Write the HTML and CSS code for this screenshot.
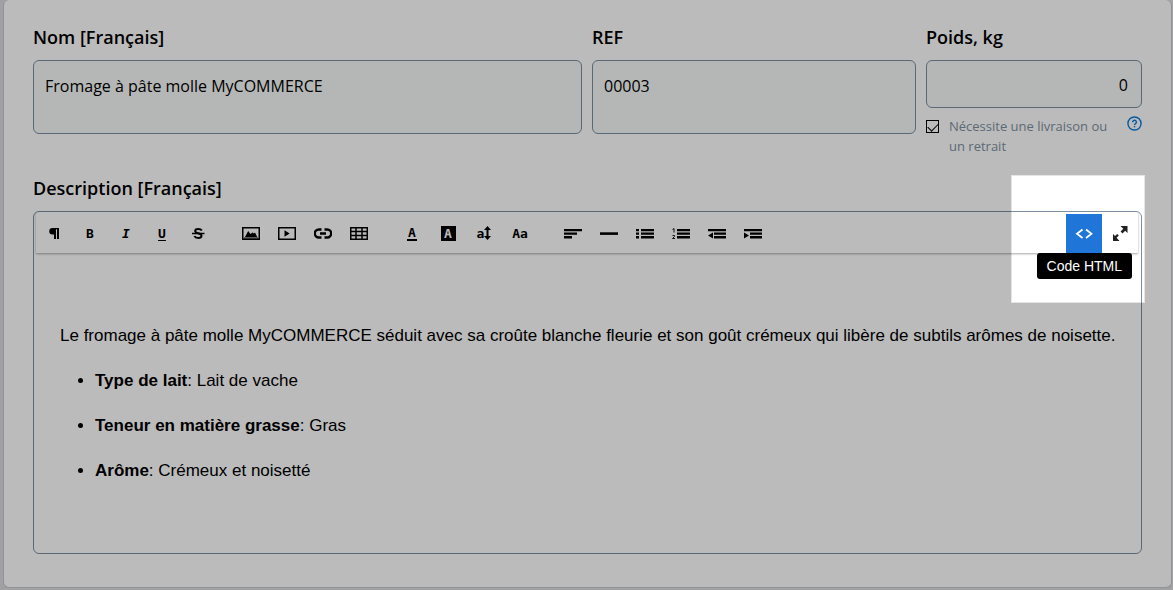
FILE: index.html
```html
<!DOCTYPE html>
<html lang="fr">
<head>
<meta charset="utf-8">
<meta name="viewport" content="width=device-width, initial-scale=1">
<title>Produit</title>
<link rel="stylesheet" href="styles.css">
</head>
<body>
<main class="card">
  <form class="form">
    <div class="fields">
      <div class="field">
        <label class="label" for="name">Nom [Français]</label>
        <textarea class="input area" id="name">Fromage à pâte molle MyCOMMERCE</textarea>
      </div>
      <div class="field">
        <label class="label" for="ref">REF</label>
        <textarea class="input area" id="ref">00003</textarea>
      </div>
      <div class="field">
        <label class="label" for="weight">Poids, kg</label>
        <input class="input weight" id="weight" type="text" value="0">
        <div class="shipping">
          <input class="check" id="ship" type="checkbox" checked>
          <label class="hint" for="ship">Nécessite une livraison ou un retrait</label>
          <button class="help" type="button" aria-label="Aide">
            <svg width="15" height="15" viewBox="0 0 16 16" fill="none" stroke="currentColor" stroke-width="1.500"><circle cx="8" cy="8" r="7"/><path d="M6 6.600a2 2 0 1 1 3.100 1.600c-.8.5-1.100.8-1.100 1.500"/><path d="M8 10.600v1.500"/></svg>
          </button>
        </div>
      </div>
    </div>

    <h2 class="label section">Description [Français]</h2>
    <div class="editor">
      <div class="toolbar">
        <div class="group">
          <button class="tool" type="button" aria-label="Format"><svg class="icon" viewBox="0 0 18 18"><path d="M7.500 4H14v11h-2V5.200h-1V15H9v-4.500H7.500A3.250 3.250 0 0 1 7.500 4z"/></svg></button>
          <button class="tool" type="button" aria-label="Gras">B</button>
          <button class="tool italic" type="button" aria-label="Italique">I</button>
          <button class="tool underline" type="button" aria-label="Souligné">U</button>
          <button class="tool" type="button" aria-label="Barré"><svg class="icon" viewBox="0 0 18 18" fill="none" stroke="currentColor" stroke-width="2"><path d="M12.800 6.500C12 5.200 10.700 4.900 9.300 4.900 7.400 4.900 6.200 5.600 6.200 6.900c0 1.400 1.600 1.900 3 2.300 1.900.5 3.300 1 3.300 2.500 0 1.600-1.400 2.300-3.300 2.300-1.800 0-3.200-.6-3.800-1.900"/><path d="M3 9.500h12.500" stroke-width="1.500"/></svg></button>
        </div>
        <div class="group">
          <button class="tool" type="button" aria-label="Image"><svg class="icon" viewBox="0 0 18 18"><path fill-rule="evenodd" d="M0 3h18v13H0zM1.500 4.500v10h15v-10z"/><path d="M3 13l3.200-6 2.300 3 2-1.500 1.500 1 1-1 2.200 4.500z"/><path d="M2 13h14v2H2z" opacity=".5"/></svg></button>
          <button class="tool" type="button" aria-label="Vidéo"><svg class="icon" viewBox="0 0 18 18"><path fill-rule="evenodd" d="M0 3h18v13H0zM1.500 4.500v10h15v-10z"/><path d="M6.500 6.300l5.200 3.200-5.200 3.200z"/></svg></button>
          <button class="tool" type="button" aria-label="Lien"><svg class="icon" viewBox="0 0 18 18" fill="none" stroke="currentColor" stroke-width="2.400"><path d="M7.500 5.500H4.800A3.800 3.800 0 0 0 4.800 13.500h2.700M10.500 5.500h2.700a3.800 3.800 0 0 1 0 8h-2.700M6 9.500h6"/></svg></button>
          <button class="tool" type="button" aria-label="Tableau"><svg class="icon" viewBox="0 0 18 18" fill="none" stroke="currentColor" stroke-width="1.500"><path d="M.75 3.750h16.500v11.500H.75zM.75 7.500h16.500M.75 11.500h16.500M6 3.750v11.500M12 3.750v11.500"/></svg></button>
        </div>
        <div class="group">
          <button class="tool" type="button" aria-label="Couleur du texte"><span class="color-letter">A</span></button>
          <button class="tool" type="button" aria-label="Couleur du fond"><span class="fill-letter">A</span></button>
          <button class="tool" type="button" aria-label="Taille"><span>a</span><svg class="updown" viewBox="0 0 7 16"><path d="M3.500 1L7 5H4.500v6H7l-3.500 4L0 11h2.500V5H0z"/></svg></button>
          <button class="tool" type="button" aria-label="Police">Aa</button>
        </div>
        <div class="group">
          <button class="tool" type="button" aria-label="Alignement"><svg class="icon" viewBox="0 0 18 18"><path d="M0 5h18v2.300H0zM0 8.500h13v2.300H0zM0 12h8v2.500H0z"/></svg></button>
          <button class="tool" type="button" aria-label="Ligne horizontale"><svg class="icon" viewBox="0 0 18 18"><path d="M0 8.300h18v2.600H0z"/></svg></button>
          <button class="tool" type="button" aria-label="Liste à puces"><svg class="icon" viewBox="0 0 18 18"><path d="M0 5h3v2.300H0zM0 8.500h3v2.300H0zM0 12h3v2.500H0zM5 5h13v2.300H5zM5 8.500h13v2.300H5zM5 12h13v2.500H5z"/></svg></button>
          <button class="tool" type="button" aria-label="Liste numérotée"><svg class="icon" viewBox="0 0 18 18"><path d="M5 5h13v2.300H5zM5 8.500h13v2.300H5zM5 12h13v2.500H5z"/><path d="M.5 5.500L2 4.500v4M.5 11.500h2v1l-2 2h2.500" fill="none" stroke="currentColor" stroke-width=".9"/></svg></button>
          <button class="tool" type="button" aria-label="Diminuer le retrait"><svg class="icon" viewBox="0 0 18 18"><path d="M0 5h18v2.300H0zM6 8.500h12v2.300H6zM6 12h12v2.500H6zM5 8.500v6l-5-3z"/></svg></button>
          <button class="tool" type="button" aria-label="Augmenter le retrait"><svg class="icon" viewBox="0 0 18 18"><path d="M0 5h18v2.300H0zM6 8.500h12v2.300H6zM6 12h12v2.500H6zM0 8.500v6l5-3z"/></svg></button>
        </div>
        <div class="group end">
          <div class="tip-anchor">
            <button class="tool active" type="button" aria-describedby="tip" aria-label="Code HTML"><svg class="icon" viewBox="0 0 18 18" fill="none" stroke="currentColor" stroke-width="1.800"><path d="M7.500 5.500L2 9.800l5.500 4.200M11 5.500l5.500 4.300L11 14"/></svg></button>
            <span class="tip" id="tip" role="tooltip">Code HTML</span>
          </div>
          <button class="tool dark" type="button" aria-label="Plein écran"><svg class="icon" viewBox="0 0 18 18"><path d="M9.500 2h7v7L14.200 6.700 11.500 9.400 9.600 7.500 12.300 4.800zM2 10l2 2 2.200-2 1.600 1.600-2.200 2.200L8.500 17H2z"/></svg></button>
        </div>
      </div>
      <div class="content" contenteditable="true">
        <p class="para">Le fromage à pâte molle MyCOMMERCE séduit avec sa croûte blanche fleurie et son goût crémeux qui libère de subtils arômes de noisette.</p>
        <ul class="list">
          <li class="item"><b>Type de lait</b>: Lait de vache</li>
          <li class="item"><b>Teneur en matière grasse</b>: Gras</li>
          <li class="item"><b>Arôme</b>: Crémeux et noisetté</li>
        </ul>
      </div>
      <div class="spotlight"></div>
    </div>
  </form>
</main>
</body>
</html>
```

FILE: styles.css
```css
* { box-sizing: border-box; }

body {
  margin: 0;
  padding: 0 1px 2px 3px;
  background: #dcdcdf;
  color: #000;
  font-family: "Open Sans", "Noto Sans", sans-serif;
}

.card {
  padding: 23px 29px 33px;
  background: #fff;
  border: 1px solid #c3cacf;
  border-top: 0;
  border-radius: 6px;
}

.fields {
  display: grid;
  grid-template-columns: 549fr 324fr 216fr;
  gap: 10px;
}

.field {
  display: flex;
  flex-direction: column;
}

.label {
  margin: 0 0 9px;
  font-size: 18px;
  font-weight: 600;
  line-height: 28px;
}

.input {
  width: 100%;
  margin: 0;
  padding: 12px 11px;
  border: 1px solid #7c8fa1;
  border-radius: 6px;
  background: #f7faf8;
  color: #000;
  font: 16px/26px "Open Sans", "Noto Sans", sans-serif;
}

.area {
  display: block;
  height: 74px;
  resize: none;
}

.weight {
  height: 48px;
  padding: 2px 13px 0;
  text-align: right;
}

.shipping {
  display: flex;
  align-items: flex-start;
  padding-top: 8px;
}

.check {
  flex: none;
  appearance: none;
  width: 13px;
  height: 13px;
  margin: 4px 10px 0 0;
  border: 1px solid #000;
  background: #fff;
}

.check:checked::before {
  content: "";
  display: block;
  width: 9px;
  height: 5px;
  margin: 2px 1px;
  border: solid #000;
  border-width: 0 0 1px 1px;
  transform: rotate(-45deg);
}

.hint {
  flex: 1;
  padding-right: 16px;
  color: #8090a2;
  font-size: 13px;
  line-height: 20px;
}

.help {
  display: flex;
  padding: 0;
  border: 0;
  background: none;
  color: #087be0;
}

.section { margin-top: 18px; }

.editor {
  position: relative;
  min-height: 343px;
  border: 1px solid #7c8fa1;
  border-radius: 6px;
}

.toolbar {
  display: flex;
  gap: 17px;
  margin: 0 3px 0 2px;
  padding: 2px 0 0;
  box-shadow: 0 1px 2px rgba(0, 0, 0, 0.35);
  clip-path: inset(0 -2px -30px -2px);
}

.group { display: flex; }

.end { margin-left: auto; }

.tool {
  display: flex;
  align-items: center;
  justify-content: center;
  width: 36px;
  height: 39px;
  padding: 0 0 1px;
  border: 0;
  background: none;
  color: #000;
  font: bold 13px "DejaVu Sans Mono", monospace;
}

.icon {
  width: 18px;
  height: 18px;
  fill: currentColor;
}

.icon[fill="none"] { fill: none; }

.italic { font-style: italic; }

.underline { text-decoration: underline; text-underline-offset: 2px; }

.color-letter {
  width: 10px;
  border-bottom: 2px solid #000;
  line-height: 13px;
}

.fill-letter {
  width: 15px;
  background: #000;
  color: #fff;
  line-height: 15px;
}

.updown { width: 7px; height: 16px; }

.dark { color: #222; }

.tip-anchor { position: relative; }

.active {
  background: #1f76d8;
  color: #fff;
}

.tip {
  position: absolute;
  top: 100%;
  right: -30px;
  z-index: 3;
  padding: 0 10px;
  border-radius: 3px;
  background: #000;
  color: #fff;
  font: 14px/26px "Liberation Sans", Arial, sans-serif;
  white-space: nowrap;
}

.content {
  padding: 69px 16px 40px 26px;
  outline: 0;
  font: 17px/27px "Liberation Sans", Arial, sans-serif;
}

.para { margin: 0 0 18px; }

.list {
  margin: 0;
  padding-left: 35px;
}

.item { margin-bottom: 18px; }

/* Dims everything outside the highlighted corner of the toolbar. */
.spotlight {
  position: absolute;
  top: -37px;
  right: -4px;
  z-index: 2;
  width: 134px;
  height: 128px;
  border: 1px solid rgba(0, 0, 0, 0.1);
  box-shadow: 0 0 0 4000px rgba(0, 0, 0, 0.267);
  pointer-events: none;
}
```
